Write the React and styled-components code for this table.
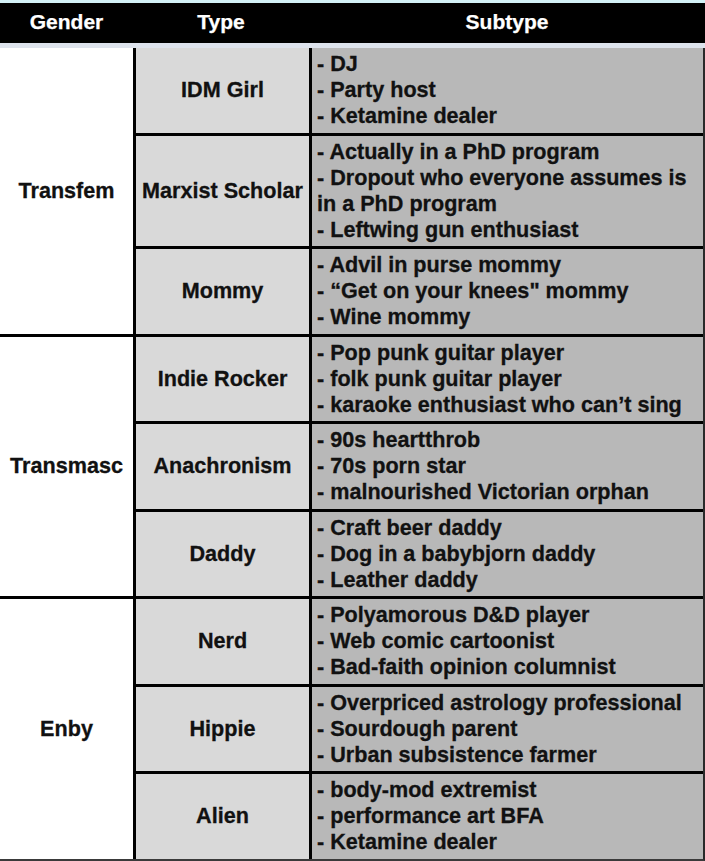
import React from "react";
import styled, { createGlobalStyle } from "styled-components";

const Global = createGlobalStyle`
  html, body { margin: 0; padding: 0; background: #ffffff; }
  body { font-family: "Liberation Sans", Arial, sans-serif; }
`;

const Page = styled.div`
  width: 705px;
  height: 861px;
  overflow: hidden;
  background: #ffffff;
  display: flex;
  flex-direction: column;
  & > * { flex-shrink: 0; }
`;

const TopStrip = styled.div`
  height: 3px;
  background: #d3f1f6;
`;

const Header = styled.div`
  height: 40px;
  background: #000000;
  display: grid;
  grid-template-columns: 133px 176px 396px;
  align-items: center;
`;

const HeadCell = styled.div`
  color: #ffffff;
  font-weight: 700;
  font-size: 21px;
  text-align: center;
  padding-bottom: 2px;
  -webkit-text-stroke: 0.25px #ffffff;
`;

const Band = styled.div`
  height: 5px;
  background: #dde3ec;
`;

const Table = styled.div`
  display: grid;
  grid-template-columns: 133px 173px 391px;
  column-gap: 3px;
  row-gap: 3px;
  background: #000000;
  width: 703px;
  border-right: 2px solid #2a2a2a;
  border-bottom: 2px solid #3a3a3a;
`;

const textStyle = `
  font-weight: 700;
  font-size: 21.6px;
  color: #111111;
  -webkit-text-stroke: 0.3px #111111;
`;

const GenderCell = styled.div`
  grid-row: span 3;
  background: #ffffff;
  display: flex;
  align-items: center;
  justify-content: center;
  ${textStyle}
`;

const TypeCell = styled.div`
  background: #d9d9d9;
  display: flex;
  align-items: center;
  justify-content: center;
  white-space: nowrap;
  ${textStyle}
`;

const SubCell = styled.div`
  background: #b8b8b8;
  padding: 3px 0 3.5px 5px;
  line-height: 26px;
  ${textStyle}
`;

const Line = styled.div`
  white-space: nowrap;
`;

const data = [
  {
    gender: "Transfem",
    types: [
      { name: "IDM Girl", subs: ["- DJ", "- Party host", "- Ketamine dealer"] },
      {
        name: "Marxist Scholar",
        subs: [
          "- Actually in a PhD program",
          "- Dropout who everyone assumes is",
          "in a PhD program",
          "- Leftwing gun enthusiast",
        ],
      },
      {
        name: "Mommy",
        subs: ["- Advil in purse mommy", "- \u201cGet on your knees\" mommy", "- Wine mommy"],
      },
    ],
  },
  {
    gender: "Transmasc",
    types: [
      {
        name: "Indie Rocker",
        subs: [
          "- Pop punk guitar player",
          "- folk punk guitar player",
          "- karaoke enthusiast who can\u2019t sing",
        ],
      },
      {
        name: "Anachronism",
        subs: ["- 90s heartthrob", "- 70s porn star", "- malnourished Victorian orphan"],
      },
      {
        name: "Daddy",
        subs: ["- Craft beer daddy", "- Dog in a babybjorn daddy", "- Leather daddy"],
      },
    ],
  },
  {
    gender: "Enby",
    types: [
      {
        name: "Nerd",
        subs: [
          "- Polyamorous D&D player",
          "- Web comic cartoonist",
          "- Bad-faith opinion columnist",
        ],
      },
      {
        name: "Hippie",
        subs: [
          "- Overpriced astrology professional",
          "- Sourdough parent",
          "- Urban subsistence farmer",
        ],
      },
      {
        name: "Alien",
        subs: ["- body-mod extremist", "- performance art BFA", "- Ketamine dealer"],
      },
    ],
  },
];

export default function App() {
  return (
    <Page>
      <Global />
      <TopStrip />
      <Header>
        <HeadCell>Gender</HeadCell>
        <HeadCell>Type</HeadCell>
        <HeadCell>Subtype</HeadCell>
      </Header>
      <Band />
      <Table>
        {data.map((g) => (
          <React.Fragment key={g.gender}>
            <GenderCell>{g.gender}</GenderCell>
            {g.types.map((t) => (
              <React.Fragment key={t.name}>
                <TypeCell>{t.name}</TypeCell>
                <SubCell>
                  {t.subs.map((s, i) => (
                    <Line key={i}>{s}</Line>
                  ))}
                </SubCell>
              </React.Fragment>
            ))}
          </React.Fragment>
        ))}
      </Table>
    </Page>
  );
}
